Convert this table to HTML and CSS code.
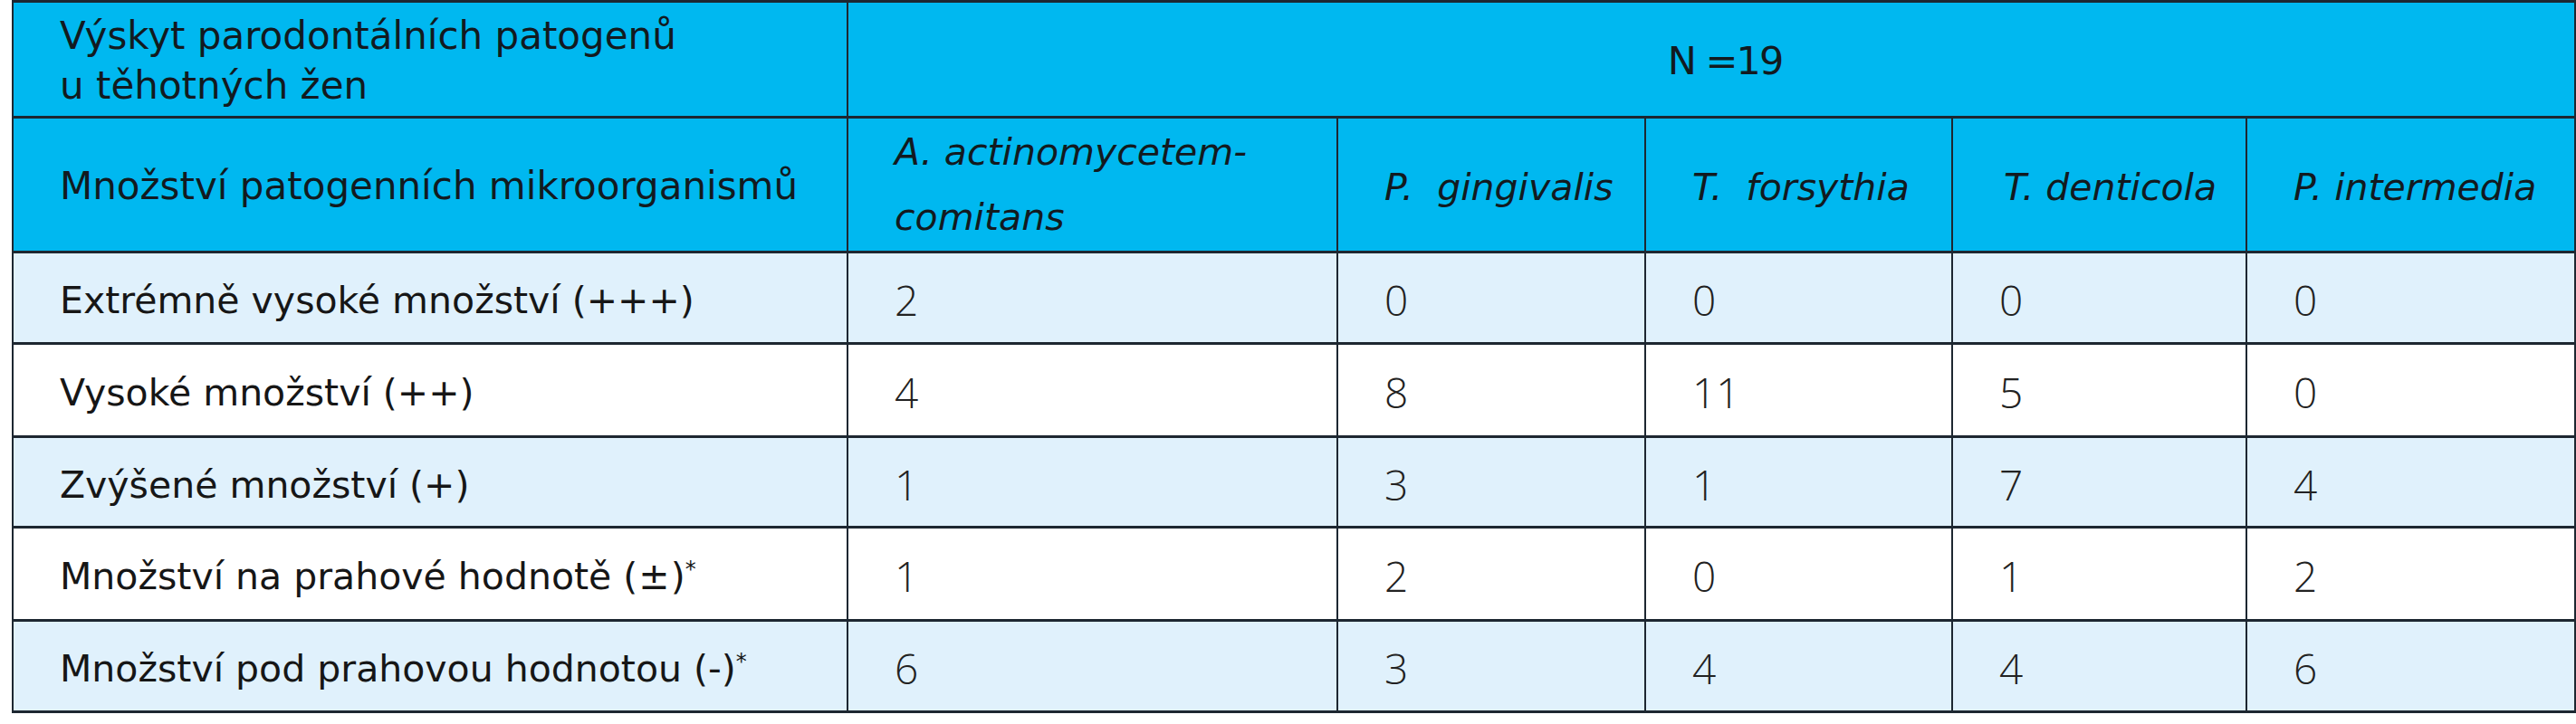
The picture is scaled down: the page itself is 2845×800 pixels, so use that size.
FILE: index.html
```html
<!DOCTYPE html>
<html lang="cs">
<head>
<meta charset="utf-8">
<title>Výskyt parodontálních patogenů u těhotných žen</title>
<link rel="stylesheet" href="styles.css">
</head>
<body>
<table class="data">
  <colgroup>
    <col class="c-label">
    <col class="c-a">
    <col class="c-b">
    <col class="c-c">
    <col class="c-d">
    <col class="c-e">
  </colgroup>
  <thead>
    <tr class="head-1">
      <th class="lbl lbl-2">Výskyt parodontálních patogenů<br>u těhotných žen</th>
      <th class="n" colspan="5">N =19</th>
    </tr>
    <tr class="head-2">
      <th class="lbl">Množství patogenních mikroorganismů</th>
      <th class="sp sp-2">A. actinomycetem-<br>comitans</th>
      <th class="sp">P.&nbsp; gingivalis</th>
      <th class="sp">T.&nbsp; forsythia</th>
      <th class="sp sp-c">T. denticola</th>
      <th class="sp">P. intermedia</th>
    </tr>
  </thead>
  <tbody>
    <tr class="r1 tint">
      <th class="row">Extrémně vysoké množství (+++)</th>
      <td>2</td><td>0</td><td>0</td><td>0</td><td>0</td>
    </tr>
    <tr class="r2">
      <th class="row">Vysoké množství (++)</th>
      <td>4</td><td>8</td><td>11</td><td>5</td><td>0</td>
    </tr>
    <tr class="r3 tint">
      <th class="row">Zvýšené množství (+)</th>
      <td>1</td><td>3</td><td>1</td><td>7</td><td>4</td>
    </tr>
    <tr class="r4">
      <th class="row">Množství na prahové hodnotě (<span class="pm">±</span>)<sup>*</sup></th>
      <td>1</td><td>2</td><td>0</td><td>1</td><td>2</td>
    </tr>
    <tr class="r5 tint">
      <th class="row">Množství pod prahovou hodnotou (-)<sup>*</sup></th>
      <td>6</td><td>3</td><td>4</td><td>4</td><td>6</td>
    </tr>
  </tbody>
</table>
</body>
</html>
```
FILE: styles.css
```css
html, body {
  margin: 0;
  padding: 0;
  background: #ffffff;
}

body {
  padding-left: 13px;
  font-family: "DejaVu Sans", "Liberation Sans", sans-serif;
  color: #141414;
}

.data {
  border-collapse: collapse;
  table-layout: fixed;
  width: 2830px;
}

.c-label { width: 922px; }
.c-a { width: 541px; }
.c-b { width: 340px; }
.c-c { width: 339px; }
.c-d { width: 325px; }
.c-e { width: 363px; }

.data th,
.data td {
  border: 3px solid #1d2731;
  border-left-width: 2px;
  border-right-width: 2px;
  padding: 0 10px 0 51px;
  text-align: left;
  vertical-align: middle;
  font-weight: normal;
  white-space: nowrap;
  overflow: hidden;
}

.data thead th {
  background: #00b8f0;
  color: #121a20;
  font-size: 42px;
}

.head-1 { height: 128px; }
.head-2 { height: 149px; }

.data .lbl { line-height: 55px; padding-top: 3px; }
.data .lbl-2 { padding-top: 2px; }

.data .n {
  text-align: center;
  padding-left: 40px;
  padding-top: 2px;
  font-size: 43px;
  letter-spacing: -2px;
}

.data .sp {
  font-style: italic;
  font-size: 41px;
  line-height: 72px;
  padding-top: 6px;
}
.data .sp-2 { padding-top: 0; }
.data .sp-c { padding-left: 56px; }

tbody tr { height: 103px; }
tbody .r1 { height: 101px; }
tbody .r3 { height: 100px; }
tbody .r4 { height: 103px; }
tbody .r5 { height: 101px; }

.data tbody tr.tint th,
.data tbody tr.tint td { background: #e0f1fc; }

.data .row {
  font-size: 41px;
  color: #161616;
  padding-top: 6px;
}

.row sup {
  font-size: 24px;
  vertical-align: 14px;
  line-height: 0;
}

.pm {
  display: inline-block;
  padding: 0 1px;
}

.data tbody td {
  font-family: "Open Sans", "DejaVu Sans", sans-serif;
  font-weight: 300;
  font-size: 46px;
  color: #222222;
  padding-top: 4px;
}
```
